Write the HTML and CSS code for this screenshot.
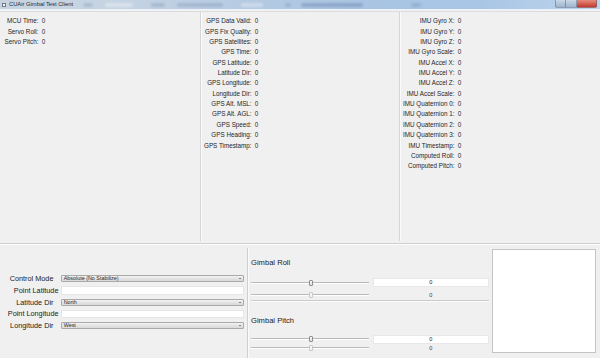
FILE: index.html
```html
<!DOCTYPE html>
<html>
<head>
<meta charset="utf-8">
<title>CUAir Gimbal Test Client</title>
<link rel="stylesheet" href="styles.css">
</head>
<body>
<div class="window">
  <div class="titlebar">
    <span class="app-icon"></span>
    <span class="title">CUAir Gimbal Test Client</span>
    <div class="glass">
      <span class="blob b1"></span>
      <span class="blob b2"></span>
      <span class="blob b3"></span>
      <span class="blob b4"></span>
      <span class="blob b5"></span>
      <span class="blob b6"></span>
      <span class="blob b7"></span>
      <span class="blob b8"></span>
    </div>
    <div class="wbtns">
      <span class="wb wb-min"></span>
      <span class="wb wb-max"></span>
      <span class="wb wb-close"></span>
    </div>
  </div>

  <div class="top">
    <div class="col c1">
      <div class="form">
        <span class="k">MCU Time:</span><span class="v">0</span>
        <span class="k">Servo Roll:</span><span class="v">0</span>
        <span class="k">Servo Pitch:</span><span class="v">0</span>
      </div>
    </div>
    <div class="col c2">
      <div class="form">
        <span class="k">GPS Data Valid:</span><span class="v">0</span>
        <span class="k">GPS Fix Quality:</span><span class="v">0</span>
        <span class="k">GPS Satellites:</span><span class="v">0</span>
        <span class="k">GPS Time:</span><span class="v">0</span>
        <span class="k">GPS Latitude:</span><span class="v">0</span>
        <span class="k">Latitude Dir:</span><span class="v">0</span>
        <span class="k">GPS Longitude:</span><span class="v">0</span>
        <span class="k">Longitude Dir:</span><span class="v">0</span>
        <span class="k">GPS Alt. MSL:</span><span class="v">0</span>
        <span class="k">GPS Alt. AGL:</span><span class="v">0</span>
        <span class="k">GPS Speed:</span><span class="v">0</span>
        <span class="k">GPS Heading:</span><span class="v">0</span>
        <span class="k">GPS Timestamp:</span><span class="v">0</span>
      </div>
    </div>
    <div class="col c3">
      <div class="form">
        <span class="k">IMU Gyro X:</span><span class="v">0</span>
        <span class="k">IMU Gyro Y:</span><span class="v">0</span>
        <span class="k">IMU Gyro Z:</span><span class="v">0</span>
        <span class="k">IMU Gyro Scale:</span><span class="v">0</span>
        <span class="k">IMU Accel X:</span><span class="v">0</span>
        <span class="k">IMU Accel Y:</span><span class="v">0</span>
        <span class="k">IMU Accel Z:</span><span class="v">0</span>
        <span class="k">IMU Accel Scale:</span><span class="v">0</span>
        <span class="k">IMU Quaternion 0:</span><span class="v">0</span>
        <span class="k">IMU Quaternion 1:</span><span class="v">0</span>
        <span class="k">IMU Quaternion 2:</span><span class="v">0</span>
        <span class="k">IMU Quaternion 3:</span><span class="v">0</span>
        <span class="k">IMU Timestamp:</span><span class="v">0</span>
        <span class="k">Computed Roll:</span><span class="v">0</span>
        <span class="k">Computed Pitch:</span><span class="v">0</span>
      </div>
    </div>
  </div>

  <div class="hsep"></div>

  <div class="bottom">
    <div class="ctrl">
      <div class="ctrl-form">
        <span class="flabel combo-label">Control Mode</span>
        <div class="combo"><span>Absolute (No Stabilize)</span><span class="arrow"></span></div>
        <span class="flabel">Point Latitude</span>
        <div class="edit"></div>
        <span class="flabel combo-label">Latitude Dir</span>
        <div class="combo"><span>North</span><span class="arrow"></span></div>
        <span class="flabel">Point Longitude</span>
        <div class="edit"></div>
        <span class="flabel combo-label">Longitude Dir</span>
        <div class="combo"><span>West</span><span class="arrow"></span></div>
      </div>
    </div>

    <div class="gimbal">
      <div class="gtitle first">Gimbal Roll</div>
      <div class="srow edit-row">
        <div class="slider"><span class="handle"></span></div>
        <div class="val-edit">0</div>
      </div>
      <div class="srow text-row">
        <div class="slider"><span class="handle dim"></span></div>
        <div class="val-text">0</div>
      </div>
      <div class="hline"></div>
      <div class="gtitle second">Gimbal Pitch</div>
      <div class="srow edit-row r3">
        <div class="slider"><span class="handle"></span></div>
        <div class="val-edit">0</div>
      </div>
      <div class="srow text-row r4">
        <div class="slider"><span class="handle dim"></span></div>
        <div class="val-text">0</div>
      </div>
    </div>

    <div class="view">
      <div class="canvas"></div>
    </div>
  </div>
</div>
</body>
</html>
```

FILE: styles.css
```css
* { box-sizing: border-box; }

html, body {
  margin: 0;
  padding: 0;
}

body {
  width: 600px;
  height: 358px;
  overflow: hidden;
  background: #f0f0f0;
  font-family: "Liberation Sans", Arial, sans-serif;
  color: #262626;
}

.window {
  width: 600px;
  height: 358px;
  display: flex;
  flex-direction: column;
  background: #f0f0f0;
}

/* ---------- title bar ---------- */
.titlebar {
  height: 11px;
  flex: none;
  display: flex;
  align-items: flex-start;
  border-bottom: 2px solid #eef2f7;
  background: linear-gradient(to right, #c8d3df 0%, #c6d4e3 18%, #b6cbe2 40%, #a9c4e3 62%, #aac6e6 80%, #bcd3ec 100%);
  overflow: hidden;
}

.app-icon {
  width: 4px;
  height: 4px;
  margin: 2.5px 0 0 2px;
  background: #f6f6f6;
  border: 1px solid #6a7a8c;
  flex: none;
}

.title {
  font-size: 5.8px;
  line-height: 9px;
  margin-left: 3px;
  color: #1e2a36;
  white-space: nowrap;
  flex: none;
}

.glass {
  display: flex;
  align-items: flex-start;
  height: 9px;
  flex: 1;
}

.blob {
  height: 4px;
  margin-top: 2.5px;
  border-radius: 2px;
  background: rgba(80, 110, 150, 0.22);
  filter: blur(0.8px);
  flex: none;
}
.b1 { width: 10px; margin-left: 10px; }
.b2 { width: 28px; margin-left: 12px; background: rgba(255,255,255,0.35); }
.b3 { width: 14px; margin-left: 18px; }
.b4 { width: 46px; margin-left: 12px; }
.b5 { width: 22px; margin-left: 18px; background: rgba(255,255,255,0.3); }
.b6 { width: 6px;  margin-left: 22px; }
.b7 { width: 62px; margin-left: 10px; background: rgba(60, 90, 140, 0.28); }
.b8 { width: 10px; margin-left: 48px; }

.wbtns {
  display: flex;
  height: 8px;
  margin-right: 3px;
  flex: none;
}

.wb {
  height: 8px;
  border: 1px solid rgba(70, 90, 120, 0.45);
  border-top: none;
}
.wb-min {
  width: 11px;
  border-radius: 0 0 0 2px;
  background: linear-gradient(#c9d7e6, #9fb5cd);
}
.wb-max {
  width: 11px;
  border-left: none;
  background: linear-gradient(#c9d7e6, #9fb5cd);
}
.wb-close {
  width: 20px;
  border-left: none;
  border-radius: 0 0 2px 0;
  background: linear-gradient(#e48b7f, #c4392c);
}

/* ---------- top data section ---------- */
.top {
  height: 232px;
  flex: none;
  display: grid;
  grid-template-columns: 200px 199px 1fr;
  border-top: 1px solid #dcdcdc;
}

.col {
  padding-top: 4.2px;
  padding-bottom: 2px;
}
.c1 { padding-left: 4.5px; }
.c2, .c3 {
  padding-left: 3px;
  border-left: 1px solid #d6d6d6;
  box-shadow: inset 1px 0 0 #fbfbfb;
  margin-bottom: 2px;
}

.form {
  display: grid;
  grid-template-columns: max-content max-content;
  grid-auto-rows: 10.36px;
  column-gap: 3.2px;
  font-size: 6.3px;
  line-height: 10.36px;
}

.k {
  justify-self: end;
  white-space: nowrap;
}
.v {
  justify-self: start;
}

.hsep {
  height: 2px;
  flex: none;
  border-top: 1px solid #d0d0d0;
  background: #fcfcfc;
}

/* ---------- bottom section ---------- */
.bottom {
  flex: 1;
  display: grid;
  grid-template-columns: 247px 242px 1fr;
  min-height: 0;
}

.ctrl {
  display: flex;
  align-items: center;
  padding: 0 3px 0 4px;
}

.ctrl-form {
  width: 100%;
  display: grid;
  grid-template-columns: 54.5px 1fr;
  grid-template-rows: 7px 8.5px 7px 8.5px 7px;
  row-gap: 4px;
  column-gap: 2.2px;
  align-items: center;
  margin-top: 1px;
}

.flabel {
  justify-self: end;
  white-space: nowrap;
  font-size: 7.3px;
  line-height: 9px;
  color: #222;
}
.combo-label { padding-right: 5px; }

.combo {
  height: 7px;
  display: flex;
  align-items: center;
  justify-content: space-between;
  padding: 0 2.5px 0 2px;
  border: 1px solid #a9a9a9;
  border-radius: 1px;
  background: linear-gradient(#f3f3f3, #e2e2e2 55%, #d9d9d9);
  font-size: 5.4px;
  line-height: 5px;
  color: #2a2a2a;
  white-space: nowrap;
}

.arrow {
  width: 0;
  height: 0;
  border-left: 1.3px solid transparent;
  border-right: 1.3px solid transparent;
  border-top: 1.6px solid #222;
}

.edit {
  height: 8.5px;
  background: #fff;
  border: 1px solid #e6e6e6;
}

.gimbal {
  display: flex;
  flex-direction: column;
  padding-left: 3px;
  border-left: 1px solid #cfcfcf;
  box-shadow: inset 1px 0 0 #fbfbfb;
  margin-top: 3px;
}

.gtitle {
  height: 12px;
  line-height: 12px;
  font-size: 7.6px;
  color: #222;
  white-space: nowrap;
}
.gtitle.first { margin-top: 9.3px; }
.gtitle.second { margin-top: 12.3px; }

.srow {
  display: grid;
  grid-template-columns: 118px 116px;
  column-gap: 3.7px;
  align-items: center;
}
.edit-row { height: 9px; margin-top: 9px; }
.text-row { height: 8px; margin-top: 3.8px; }
.r3 { margin-top: 8px; }
.r4 { margin-top: 0; }

.slider {
  height: 6px;
  display: flex;
  align-items: center;
  background: linear-gradient(to bottom, transparent 2.5px, #b9b9b9 2.5px, #b9b9b9 3.5px, #ffffff 3.5px, #ffffff 4px, transparent 4px);
}

.handle {
  width: 4px;
  height: 6px;
  margin-left: 57.5px;
  border: 1px solid #8e8e8e;
  border-radius: 1px;
  background: linear-gradient(#fbfbfb, #dedede);
}
.handle.dim {
  border-color: #c9c9c9;
  background: #f3f3f3;
}

.val-edit {
  height: 9px;
  background: #fff;
  border: 1px solid #e8e8e8;
  text-align: center;
  font-size: 5.6px;
  line-height: 7px;
  color: #2a2a2a;
}

.val-text {
  text-align: center;
  font-size: 5.6px;
  line-height: 8px;
  color: #444;
}

.hline {
  height: 2px;
  margin-top: 1.4px;
  width: 238px;
  border-top: 1px solid #cbcbcb;
  background: #fbfbfb;
  flex: none;
}

.view {
  padding: 4.3px 4.3px 4.7px 2.7px;
  display: flex;
}

.canvas {
  flex: 1;
  background: #fff;
  border: 1px solid #c4c4c4;
}
```
